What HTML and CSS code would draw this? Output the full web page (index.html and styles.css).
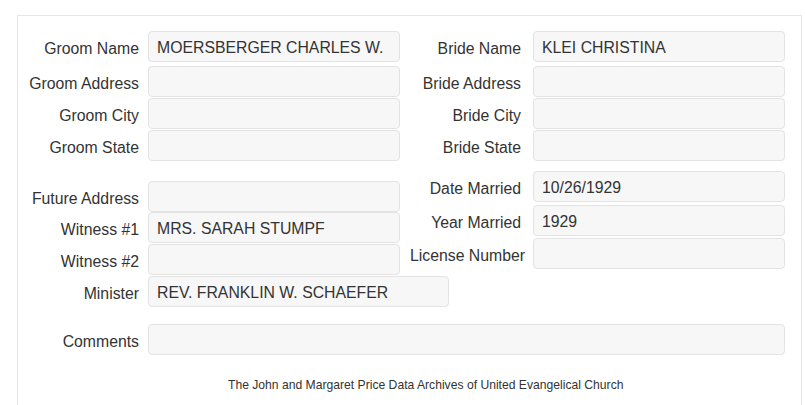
FILE: index.html
```html
<!DOCTYPE html>
<html>
<head>
<meta charset="utf-8">
<link rel="stylesheet" href="styles.css">
</head>
<body>
<div class="panel">
  <div class="top">
    <div class="row r1">
      <div class="field"><label class="lbl">Groom Name</label><div class="input">MOERSBERGER CHARLES W.</div></div>
      <div class="field right"><label class="lbl">Bride Name</label><div class="input">KLEI CHRISTINA</div></div>
    </div>
    <div class="row r2">
      <div class="field"><label class="lbl">Groom Address</label><div class="input"></div></div>
      <div class="field right"><label class="lbl">Bride Address</label><div class="input"></div></div>
    </div>
    <div class="row r3">
      <div class="field"><label class="lbl">Groom City</label><div class="input"></div></div>
      <div class="field right"><label class="lbl">Bride City</label><div class="input"></div></div>
    </div>
    <div class="row r3">
      <div class="field"><label class="lbl">Groom State</label><div class="input"></div></div>
      <div class="field right"><label class="lbl">Bride State</label><div class="input"></div></div>
    </div>
  </div>
  <div class="lower">
    <div class="col left-col">
      <div class="field fa"><label class="lbl">Future Address</label><div class="input"></div></div>
      <div class="field"><label class="lbl">Witness #1</label><div class="input">MRS. SARAH STUMPF</div></div>
      <div class="field g1"><label class="lbl">Witness #2</label><div class="input"></div></div>
      <div class="field g1"><label class="lbl">Minister</label><div class="input wide">REV. FRANKLIN W. SCHAEFER</div></div>
    </div>
    <div class="col right-col">
      <div class="field right dm"><label class="lbl">Date Married</label><div class="input">10/26/1929</div></div>
      <div class="field right ym"><label class="lbl">Year Married</label><div class="input">1929</div></div>
      <div class="field right ln"><label class="lbl lbl-long">License Number</label><div class="input"></div></div>
    </div>
  </div>
  <div class="field comments"><label class="lbl">Comments</label><div class="input full"></div></div>
  <p class="footer">The John and Margaret Price Data Archives of United Evangelical Church</p>
</div>
</body>
</html>
```

FILE: styles.css
```css
* { box-sizing: border-box; }
html, body { margin: 0; padding: 0; background: #fff; }
body {
  font-family: "Liberation Sans", Arial, sans-serif;
  font-size: 15.8px;
  color: #333;
}
.panel {
  margin: 15px 3px 0 17px;
  border: 1px solid #e6e6e6;
  border-bottom: none;
  height: 400px;
  padding-top: 15px;
}
.row { display: flex; }
.r2 { margin-top: 4px; }
.r3 { margin-top: 1px; }
.field { display: flex; align-items: center; }
.lbl {
  flex: none;
  width: 130px;
  padding-right: 9px;
  text-align: right;
  white-space: nowrap;
  padding-top: 4px;
}
.field.right .lbl { width: 133px; padding-right: 12px; }
.field.right .lbl-long { padding-right: 8px; }
.input {
  flex: none;
  width: 252px;
  height: 31px;
  border: 1px solid #e3e3e3;
  border-radius: 4px;
  background: #f7f7f7;
  padding: 1px 8px 0;
  line-height: 29px;
  color: #333;
  white-space: nowrap;
  overflow: hidden;
}
.input.wide { width: 301px; }
.input.full { width: 637px; }
.lower { display: flex; align-items: flex-start; }
.left-col { display: flex; flex-direction: column; margin-top: 20px; width: 382px; flex: none; }
.right-col { display: flex; flex-direction: column; margin-top: 10px; }
.g1 { margin-top: 1px; }
.ym { margin-top: 3px; }
.ln { margin-top: 2px; }
.comments { margin-top: 17px; }
.footer {
  margin: 23px 0 0 210px;
  font-size: 12.15px;
  color: #333;
}
```
